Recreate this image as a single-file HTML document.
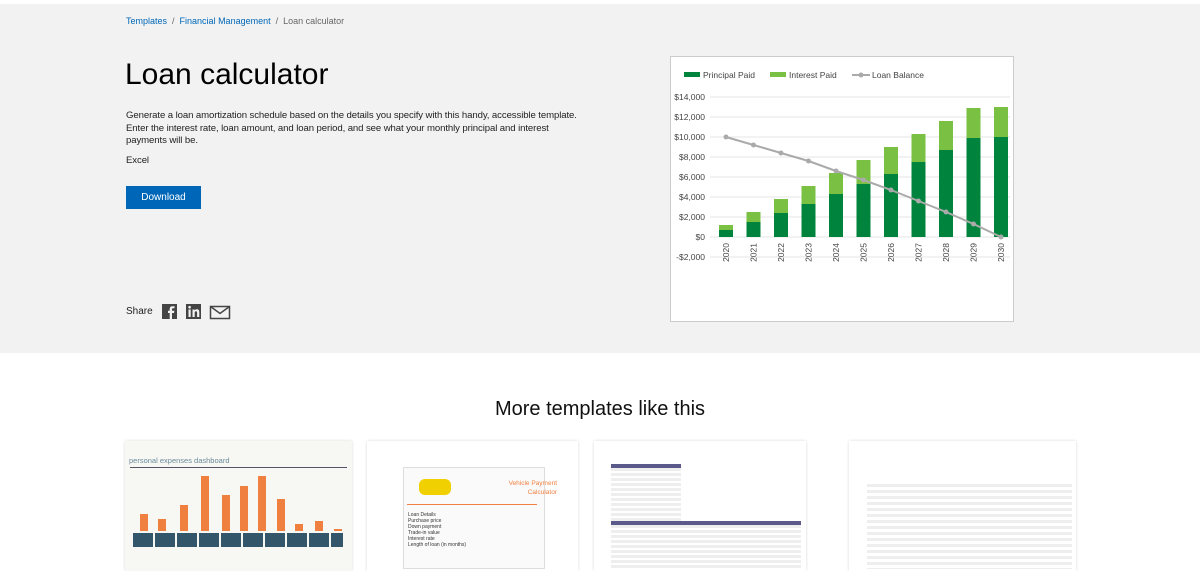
<!DOCTYPE html>
<html><head><meta charset="utf-8"><style>
body{margin:0;width:1200px;height:558px;overflow:hidden;background:#fff;font-family:"Segoe UI","Liberation Sans",sans-serif;position:relative}
.band{position:absolute;left:0;top:4px;width:1200px;height:349px;background:#f2f2f2}
.a{position:absolute}
.bc{font-size:9px;color:#666;top:16px;left:126px}
.bc span{color:#0067b8}
h1{position:absolute;margin:0;left:125px;top:58px;font-size:30px;font-weight:400;color:#000}
.desc{left:126px;top:110px;font-size:9.6px;line-height:12.5px;color:#222;width:490px;letter-spacing:-0.1px}
.btn{left:126px;top:186px;width:75px;height:23px;background:#0067b8;color:#fff;font-size:10px;text-align:center;line-height:23px}
.card{position:absolute;top:441px;height:130px;background:#fff;box-shadow:0 0 3px rgba(0,0,0,.15)}
</style></head><body>
<div class="band"></div>
<div class="a bc"><span>Templates</span> &nbsp;/&nbsp; <span>Financial Management</span> &nbsp;/&nbsp; Loan calculator</div>
<h1>Loan calculator</h1>
<div class="a desc">Generate a loan amortization schedule based on the details you specify with this handy, accessible template.<br>Enter the interest rate, loan amount, and loan period, and see what your monthly principal and interest<br>payments will be.<div style="margin-top:7px">Excel</div></div>
<div class="a btn">Download</div>
<div class="a" style="left:126px;top:306px;font-size:10px;color:#222">Share</div>
<svg class="a" style="left:161px;top:303px" width="72" height="17" viewBox="0 0 72 17">
<rect x="1" y="1" width="15" height="15" fill="#444"/><path d="M11 16V10h2l.4-2.3H11V6.3c0-.7.3-1 1-1h1.5V3.2H11.5c-2 0-2.8 1.2-2.8 2.8v1.7H7V10h1.7v6z" fill="#f2f2f2"/>
<rect x="25" y="1" width="15" height="15" fill="#444"/><rect x="27.5" y="6.5" width="2.2" height="7.5" fill="#f2f2f2"/><circle cx="28.6" cy="4.2" r="1.3" fill="#f2f2f2"/><path d="M31.5 6.5h2.1v1c.5-.8 1.3-1.2 2.3-1.2 1.8 0 2.4 1.1 2.4 2.9V14h-2.2V9.8c0-1-.3-1.6-1.100-1.6-.9 0-1.3.6-1.3 1.6V14h-2.2z" fill="#f2f2f2"/>
<rect x="49.5" y="3.5" width="19" height="12" fill="none" stroke="#444" stroke-width="1.5"/><path d="M49.5 3.5l9.5 7 9.5-7" fill="none" stroke="#444" stroke-width="1.5"/>
</svg>
<svg class="a" style="left:670px;top:56px" width="345" height="267" viewBox="670 56 345 267" font-family="Liberation Sans,sans-serif" font-size="8.5" fill="#444">
<rect x="670.5" y="56.5" width="343" height="265" fill="#fff" stroke="#ccc"/>
<rect x="684" y="72" width="16" height="5" fill="#00843d"/><text x="703" y="78">Principal Paid</text>
<rect x="770" y="72" width="16" height="5" fill="#7ac143"/><text x="789" y="78">Interest Paid</text>
<line x1="852" y1="75" x2="870" y2="75" stroke="#aaa" stroke-width="2"/><circle cx="861" cy="75" r="2.5" fill="#aaa"/><text x="872" y="78">Loan Balance</text>
<g stroke="#e6e6e6"><line x1="710" y1="97" x2="1010" y2="97"/><line x1="710" y1="117" x2="1010" y2="117"/><line x1="710" y1="137" x2="1010" y2="137"/><line x1="710" y1="157" x2="1010" y2="157"/><line x1="710" y1="177" x2="1010" y2="177"/><line x1="710" y1="197" x2="1010" y2="197"/><line x1="710" y1="217" x2="1010" y2="217"/><line x1="710" y1="237" x2="1010" y2="237"/><line x1="710" y1="257" x2="1010" y2="257"/></g>
<g text-anchor="end"><text x="705" y="100">$14,000</text><text x="705" y="120">$12,000</text><text x="705" y="140">$10,000</text><text x="705" y="160">$8,000</text><text x="705" y="180">$6,000</text><text x="705" y="200">$4,000</text><text x="705" y="220">$2,000</text><text x="705" y="240">$0</text><text x="705" y="260">-$2,000</text></g>
<g fill="#00843d">
<rect x="719" y="230" width="14" height="7"/><rect x="746.5" y="222" width="14" height="15"/><rect x="774" y="213" width="14" height="24"/><rect x="801.5" y="204" width="14" height="33"/><rect x="829" y="194" width="14" height="43"/><rect x="856.5" y="184" width="14" height="53"/><rect x="884" y="174" width="14" height="63"/><rect x="911.5" y="162" width="14" height="75"/><rect x="939" y="150" width="14" height="87"/><rect x="966.5" y="138" width="14" height="99"/><rect x="994" y="137" width="14" height="100"/></g>
<g fill="#7ac143">
<rect x="719" y="225" width="14" height="5"/><rect x="746.5" y="212" width="14" height="10"/><rect x="774" y="199" width="14" height="14"/><rect x="801.5" y="186" width="14" height="18"/><rect x="829" y="173" width="14" height="21"/><rect x="856.5" y="160" width="14" height="24"/><rect x="884" y="147" width="14" height="27"/><rect x="911.5" y="134" width="14" height="28"/><rect x="939" y="121" width="14" height="29"/><rect x="966.5" y="108" width="14" height="30"/><rect x="994" y="107" width="14" height="30"/></g>
<polyline points="726,137 753.5,145 781,153 808.5,161 836,171 863.5,180 891,190 918.5,201 946,212 973.5,224 1001,237" fill="none" stroke="#aaa" stroke-width="2"/>
<g fill="#aaa"><circle cx="726" cy="137" r="2.5"/><circle cx="753.5" cy="145" r="2.5"/><circle cx="781" cy="153" r="2.5"/><circle cx="808.5" cy="161" r="2.5"/><circle cx="836" cy="171" r="2.5"/><circle cx="863.5" cy="180" r="2.5"/><circle cx="891" cy="190" r="2.5"/><circle cx="918.5" cy="201" r="2.5"/><circle cx="946" cy="212" r="2.5"/><circle cx="973.5" cy="224" r="2.5"/><circle cx="1001" cy="237" r="2.5"/></g>
<g text-anchor="end">
<text transform="translate(729,243) rotate(-90)">2020</text><text transform="translate(756.5,243) rotate(-90)">2021</text><text transform="translate(784,243) rotate(-90)">2022</text><text transform="translate(811.5,243) rotate(-90)">2023</text><text transform="translate(839,243) rotate(-90)">2024</text><text transform="translate(866.5,243) rotate(-90)">2025</text><text transform="translate(894,243) rotate(-90)">2026</text><text transform="translate(921.5,243) rotate(-90)">2027</text><text transform="translate(949,243) rotate(-90)">2028</text><text transform="translate(976.5,243) rotate(-90)">2029</text><text transform="translate(1004,243) rotate(-90)">2030</text></g>
</svg>
<div class="a" style="left:0;width:1200px;top:398px;text-align:center;font-size:20px;color:#111">More templates like this</div>
<div class="card" style="left:125px;width:227px;background:#f7f8f4">
<div style="position:absolute;left:4px;top:15px;font-size:7.5px;color:#6a8a9a">personal expenses dashboard</div>
<div style="position:absolute;left:5px;top:26px;width:217px;height:1px;background:#556"></div>
<svg style="position:absolute;left:0;top:28px" width="227" height="70"><g fill="#f08040"><rect x="15" y="45" width="8" height="17"/><rect x="33" y="50" width="8" height="12"/><rect x="55" y="36" width="8" height="26"/><rect x="76" y="7" width="8" height="55"/><rect x="97" y="26" width="8" height="36"/><rect x="115" y="17" width="8" height="45"/><rect x="133" y="7" width="8" height="55"/><rect x="152" y="30" width="8" height="32"/><rect x="170" y="55" width="8" height="7"/><rect x="190" y="52" width="8" height="10"/><rect x="209" y="60" width="8" height="2"/></g></svg>
<div style="position:absolute;left:8px;top:92px;width:210px;height:14px;background:repeating-linear-gradient(90deg,#34566a 0 20px,#f7f8f4 20px 22px)"></div>
</div>
<div class="card" style="left:367px;width:211px">
<div style="position:absolute;left:36px;top:26px;width:140px;height:100px;background:#fafafa;border:1px solid #ddd"></div>
<div style="position:absolute;left:52px;top:38px;width:32px;height:16px;background:#f0d000;border-radius:6px"></div>
<div style="position:absolute;left:120px;top:38px;width:70px;font-size:6.5px;color:#f08040;text-align:right;line-height:9px">Vehicle Payment<br>Calculator</div>
<div style="position:absolute;left:40px;top:63px;width:130px;height:1px;background:#f08040"></div>
<div style="position:absolute;left:41px;top:71px;font-size:5px;line-height:6px;color:#333">Loan Details<br>Purchase price<br>Down payment<br>Trade-in value<br>Interest rate<br>Length of loan (in months)</div>
</div>
<div class="card" style="left:594px;width:212px">
<div style="position:absolute;left:17px;top:23px;width:70px;height:55px;background:repeating-linear-gradient(#eee 0 3px,#fff 3px 5px);border-top:4px solid #5a5a8a"></div>
<div style="position:absolute;left:17px;top:80px;width:190px;height:45px;background:repeating-linear-gradient(#eee 0 3px,#fff 3px 5px);border-top:4px solid #5a5a8a"></div>
</div>
<div class="card" style="left:849px;width:227px">
<div style="position:absolute;left:18px;top:43px;width:205px;height:85px;background:repeating-linear-gradient(#eee 0 3px,#fff 3px 6px)"></div>
</div>
</body></html>
